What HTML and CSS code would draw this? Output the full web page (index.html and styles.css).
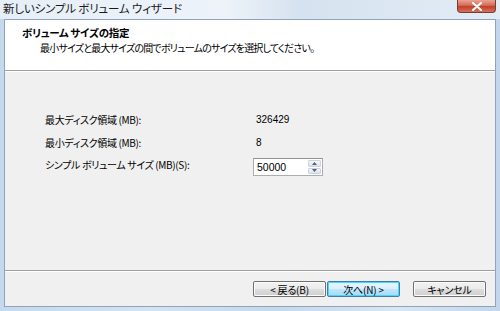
FILE: index.html
```html
<!DOCTYPE html>
<html lang="ja">
<head>
<meta charset="utf-8">
<link rel="stylesheet" href="styles.css">
</head>
<body>
<div class="window">
  <div class="titlebar">
    <span class="title">新しいシンプル ボリューム ウィザード</span>
    <div class="close">
      <svg width="12" height="9" viewBox="0 0 12 9"><path d="M2 1 L10 8 M10 1 L2 8" stroke="#fff" stroke-width="2.2" stroke-linecap="round"/></svg>
    </div>
  </div>
  <div class="client">
    <div class="header">
      <div class="h-title">ボリューム サイズの指定</div>
      <div class="h-sub">最小サイズと最大サイズの間でボリュームのサイズを選択してください。</div>
    </div>
    <div class="content">
      <div class="row"><span class="label">最大ディスク領域 (MB):</span><span class="value">326429</span></div>
      <div class="row"><span class="label">最小ディスク領域 (MB):</span><span class="value">8</span></div>
      <div class="row row-spin"><span class="label">シンプル ボリューム サイズ (MB)(S):</span>
        <div class="spin">
          <span class="spin-text">50000</span>
          <div class="spin-btns">
            <div class="sb"><svg width="5" height="3" viewBox="0 0 5 3"><path d="M0 3 L2.5 0 L5 3Z" fill="#4d6185"/></svg></div>
            <div class="sb"><svg width="5" height="3" viewBox="0 0 5 3"><path d="M0 0 L2.5 3 L5 0Z" fill="#4d6185"/></svg></div>
          </div>
        </div>
      </div>
    </div>
    <div class="footer">
      <button class="btn">&lt; 戻る(B)</button>
      <button class="btn btn-default">次へ(N) &gt;</button>
      <button class="btn btn-cancel">キャンセル</button>
    </div>
  </div>
</div>
</body>
</html>
```
FILE: styles.css
```css
html, body {
  margin: 0;
  padding: 0;
}
body {
  width: 500px;
  height: 311px;
  overflow: hidden;
  font-family: "Noto Sans CJK JP", "Liberation Sans", sans-serif;
  font-feature-settings: "palt";
  font-size: 10px;
  color: #000;
}
.window {
  width: 500px;
  height: 311px;
  display: flex;
  flex-direction: column;
  background: linear-gradient(90deg, #c5d9ee 0%, #d4e3f2 30%, #c6d8ec 55%, #d9e6f3 80%, #c3d6eb 100%);
}
.titlebar {
  height: 19px;
  display: flex;
  justify-content: space-between;
  align-items: flex-start;
  background: linear-gradient(90deg, #e6eef7 0%, #edf3f9 45%, #d5e2ef 60%, #e3ecf5 100%);
}
.title {
  margin: 1px 0 0 3px;
  font-size: 11.5px;
  line-height: 14px;
  color: #1a1a1a;
  letter-spacing: -0.15px;
}
.close {
  width: 39px;
  height: 13px;
  margin-right: 4px;
  border: 1px solid #7a3a30;
  border-top: none;
  border-radius: 0 0 4px 4px;
  background: linear-gradient(#e8a493 0%, #d56a55 45%, #c0402a 55%, #d6735d 100%);
  display: flex;
  justify-content: center;
  align-items: center;
  box-sizing: border-box;
}
.client {
  flex: 1;
  margin: 0 4px 4px 4px;
  border: 1px solid #8fa3ba;
  background: #f0f0f0;
  display: flex;
  flex-direction: column;
}
.header {
  height: 51px;
  background: #fff;
  border-bottom: 1px solid #a0a0a0;
  box-shadow: 0 1px 0 #fff;
  box-sizing: border-box;
  padding: 6px 0 0 17px;
}
.h-title {
  font-weight: bold;
  font-size: 10.5px;
  line-height: 13px;
  letter-spacing: -0.3px;
}
.h-sub {
  margin: 2px 0 0 18px;
  line-height: 13px;
  letter-spacing: -0.8px;
}
.content {
  flex: 1;
  padding: 42px 0 0 40px;
  display: flex;
  flex-direction: column;
  gap: 9px;
  border-bottom: 1px solid #a0a0a0;
  box-shadow: 0 1px 0 #fff;
}
.row {
  display: flex;
  align-items: center;
  height: 14px;
  line-height: 14px;
}
.row-spin {
  margin-top: -1px;
  height: 18px;
  align-items: flex-start;
}
.row-spin .label {
  line-height: 13px;
}
.label {
  width: 208px;
  letter-spacing: -0.35px;
}
.value {
  font-family: "Liberation Sans", sans-serif;
  font-size: 10px;
  padding-left: 3px;
}
.spin {
  width: 70px;
  height: 18px;
  box-sizing: border-box;
  border: 1px solid #abadb3;
  border-top-color: #8e9399;
  background: #fff;
  display: flex;
  justify-content: space-between;
}
.spin-text {
  font-family: "Liberation Sans", sans-serif;
  font-size: 10.5px;
  line-height: 16px;
  padding-left: 3px;
}
.spin-btns {
  width: 13px;
  display: flex;
  flex-direction: column;
  padding: 1px;
  gap: 1px;
}
.sb {
  flex: 1;
  border: 1px solid #cdd3dc;
  border-radius: 1px;
  background: linear-gradient(#f4f6f8, #dfe4ea);
  display: flex;
  justify-content: center;
  align-items: center;
}
.footer {
  height: 35px;
  display: flex;
  align-items: flex-start;
  padding: 10px 0 0 248px;
  box-sizing: border-box;
}
.btn {
  width: 73px;
  height: 16px;
  margin: 0 1px 0 0;
  padding: 0;
  font-family: "Noto Sans CJK JP", sans-serif;
  font-feature-settings: "palt";
  font-size: 10px;
  line-height: 13px;
  letter-spacing: -0.2px;
  color: #000;
  border: 1px solid #707070;
  border-radius: 2px;
  background: linear-gradient(#f2f2f2 0%, #ebebeb 48%, #dddddd 52%, #cfcfcf 100%);
  box-shadow: inset 0 0 0 1px #fcfcfc;
}
.btn-default {
  border-color: #3c7fb1;
  box-shadow: inset 0 0 0 1px #48d6fb;
  background: linear-gradient(#eaf6fd 0%, #d9f0fc 48%, #bee6fd 52%, #a7d9f5 100%);
}
.btn-cancel {
  margin-left: 12px;
}
```
